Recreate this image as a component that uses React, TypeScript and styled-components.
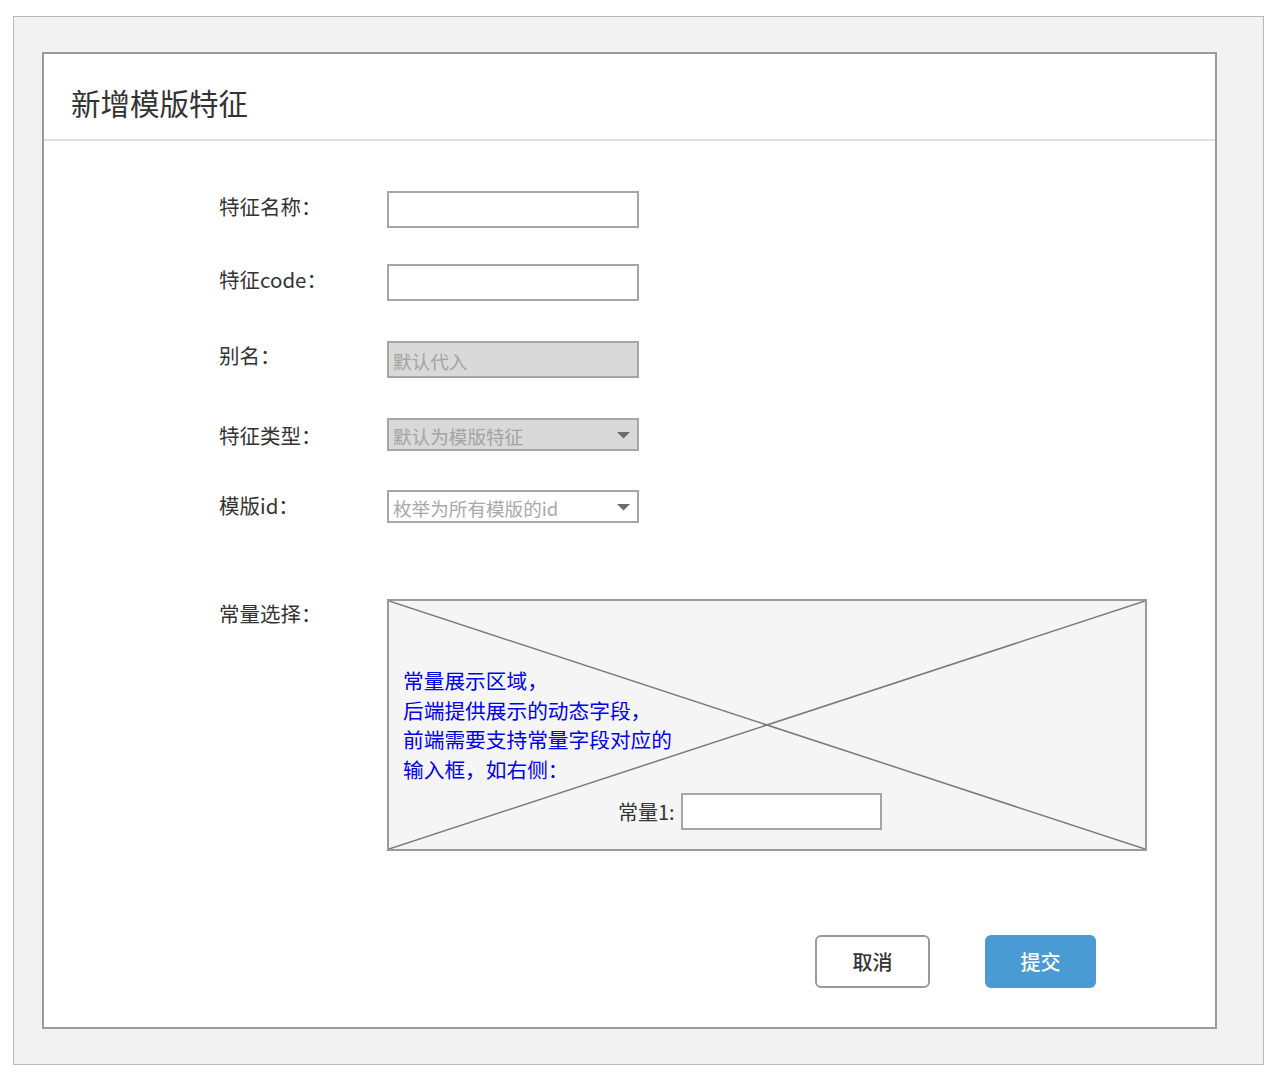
import React from "react";
import styled, { createGlobalStyle } from "styled-components";

const Global = createGlobalStyle`
  html, body { margin: 0; padding: 0; background: #ffffff; }
  body { font-family: "Noto Sans CJK SC", "Noto Sans", sans-serif; color: #333; }
  * { box-sizing: border-box; }
`;

const Outer = styled.div`
  margin: 16px 0 0 13px;
  width: 1251px;
  height: 1049px;
  background: #f2f2f2;
  border: 1px solid #b8b8b8;
  padding: 35px 0 0 28px;
`;

const Card = styled.div`
  width: 1175px;
  height: 977px;
  background: #ffffff;
  border: 2px solid #9a9a9a;
  display: flex;
  flex-direction: column;
`;

const Header = styled.div`
  height: 87px;
  border-bottom: 2px solid #dedede;
  padding: 30px 0 0 27px;
`;

const Title = styled.h1`
  margin: 0;
  font-size: 29.5px;
  line-height: 36px;
  font-weight: 400;
  color: #333;
`;

const Body = styled.div`
  display: flex;
  flex-direction: column;
  padding: 0 0 0 175px;
`;

const Row = styled.div<{ $mt: number }>`
  display: flex;
  align-items: flex-start;
  margin-top: ${(p) => p.$mt}px;
`;

const Label = styled.div<{ $off?: number }>`
  width: 168px;
  flex: none;
  font-size: 20.5px;
  line-height: 30px;
  margin-top: ${(p) => p.$off ?? 0}px;
  color: #333;
`;

const Field = styled.div<{ $h: number; $disabled?: boolean; $w?: number }>`
  width: ${(p) => p.$w ?? 252}px;
  height: ${(p) => p.$h}px;
  border: 2px solid #a6a6a6;
  background: ${(p) => (p.$disabled ? "#d9d9d9" : "#ffffff")};
  display: flex;
  align-items: center;
  justify-content: space-between;
  padding: 0 6px 0 4px;
`;

const Placeholder = styled.span<{ $dark?: boolean }>`
  font-size: 18.6px;
  line-height: 24px;
  color: ${(p) => (p.$dark ? "#a3a3a3" : "#a9a9a9")};
  margin-top: 2px;
`;

const Arrow = () => (
  <svg width="15" height="8" viewBox="0 0 15 8">
    <path d="M1 1 L14 1 L7.5 7.5 Z" fill="#6b6b6b" />
  </svg>
);

const ConstBox = styled.div`
  position: relative;
  width: 760px;
  height: 252px;
  border: 2px solid #9a9a9a;
  background: #f5f5f5;
  display: flex;
  flex-direction: column;
  padding: 65px 0 0 14px;
`;

const Cross = styled.svg`
  position: absolute;
  inset: 0;
  width: 100%;
  height: 100%;
`;

const Note = styled.div`
  position: relative;
  color: #0000ee;
  font-size: 20.7px;
  line-height: 29.5px;
`;

const ConstRow = styled.div`
  position: relative;
  display: flex;
  align-items: center;
  gap: 6px;
  margin: 9px 0 0 215px;
`;

const ConstLabel = styled.span`
  font-size: 20px;
  line-height: 28px;
  color: #333;
`;

const Footer = styled.div`
  display: flex;
  justify-content: flex-end;
  gap: 55px;
  padding-right: 119px;
  margin-top: 84px;
`;

const Button = styled.button<{ $primary?: boolean }>`
  height: 53px;
  width: ${(p) => (p.$primary ? 111 : 115)}px;
  border-radius: 6px;
  border: ${(p) => (p.$primary ? "none" : "2px solid #999")};
  background: ${(p) => (p.$primary ? "#4a9ad3" : "#ffffff")};
  color: ${(p) => (p.$primary ? "#ffffff" : "#333")};
  font-family: "Noto Sans CJK SC", "Noto Sans", sans-serif;
  font-size: 20px;
  font-weight: 500;
  padding: 0;
  cursor: pointer;
`;

export default function App() {
  return (
    <>
      <Global />
      <Outer>
        <Card>
          <Header>
            <Title>新增模版特征</Title>
          </Header>
          <Body>
            <Row $mt={50}>
              <Label $off={0}>特征名称：</Label>
              <Field $h={37} />
            </Row>
            <Row $mt={36}>
              <Label $off={0}>特征code：</Label>
              <Field $h={37} />
            </Row>
            <Row $mt={40}>
              <Label $off={-1}>别名：</Label>
              <Field $h={37} $disabled>
                <Placeholder $dark>默认代入</Placeholder>
              </Field>
            </Row>
            <Row $mt={40}>
              <Label $off={2}>特征类型：</Label>
              <Field $h={33} $disabled>
                <Placeholder $dark>默认为模版特征</Placeholder>
                <Arrow />
              </Field>
            </Row>
            <Row $mt={39}>
              <Label $off={0}>模版id：</Label>
              <Field $h={33}>
                <Placeholder>枚举为所有模版的id</Placeholder>
                <Arrow />
              </Field>
            </Row>
            <Row $mt={76}>
              <Label $off={-1}>常量选择：</Label>
              <ConstBox>
                <Cross viewBox="0 0 756 248" preserveAspectRatio="none">
                  <line x1="0" y1="0" x2="756" y2="248" stroke="#7a7a7a" strokeWidth="1.5" />
                  <line x1="756" y1="0" x2="0" y2="248" stroke="#7a7a7a" strokeWidth="1.5" />
                </Cross>
                <Note>
                  常量展示区域，
                  <br />
                  后端提供展示的动态字段，
                  <br />
                  前端需要支持常量字段对应的
                  <br />
                  输入框，如右侧：
                </Note>
                <ConstRow>
                  <ConstLabel>常量1:</ConstLabel>
                  <Field $h={37} $w={201} />
                </ConstRow>
              </ConstBox>
            </Row>
          </Body>
          <Footer>
            <Button>取消</Button>
            <Button $primary>提交</Button>
          </Footer>
        </Card>
      </Outer>
    </>
  );
}
